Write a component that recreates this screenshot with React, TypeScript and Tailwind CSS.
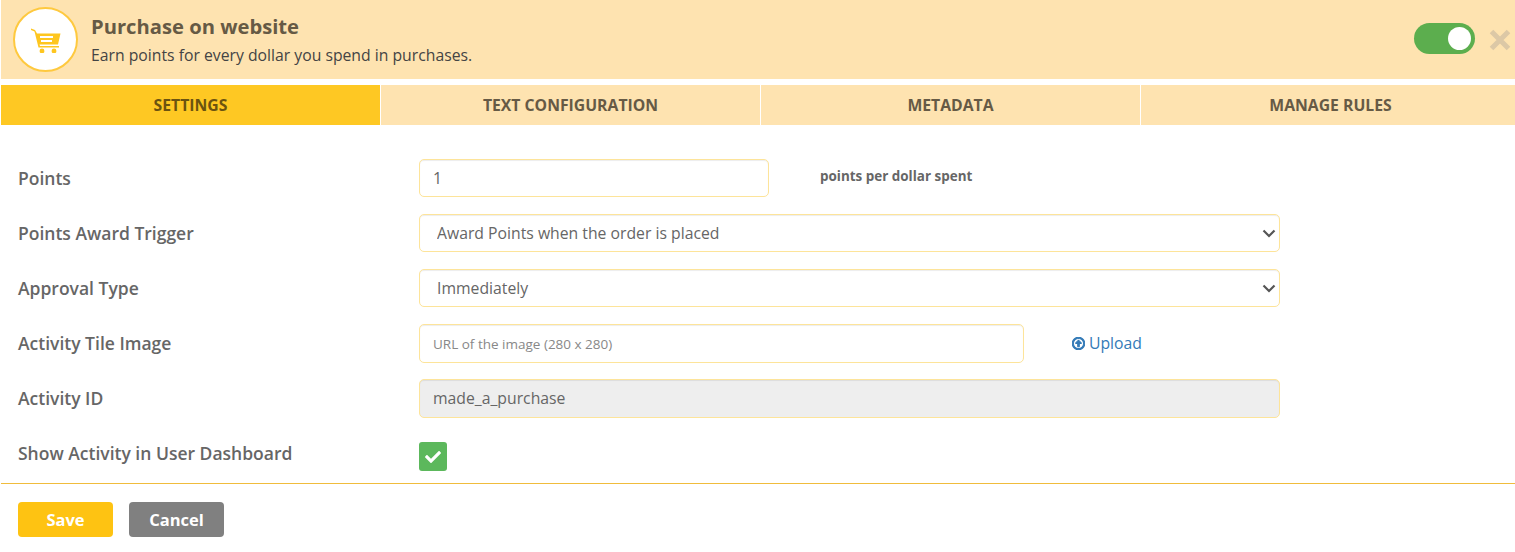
import { FaCheck, FaRegArrowAltCircleUp } from 'react-icons/fa';

const TABS = ['SETTINGS', 'TEXT CONFIGURATION', 'METADATA', 'MANAGE RULES'];

const fieldClass =
    'rounded-[5px] border border-[#fde49a] px-[13px] text-[#666] shadow-[inset_0_1px_1px_rgba(0,0,0,0.075)] outline-none';

function Label({ children }: { children: React.ReactNode }) {
    return <div className="w-[401px] shrink-0 text-[17.5px] font-semibold text-[#666]">{children}</div>;
}

function CartIcon() {
    return (
        <svg viewBox="0 0 32 26" className="h-[26px] w-[32px]">
            <path
                d="M1 1.5 5 3 7 6.5h23.5l-2.5 11H9.5l.5 1.5h19v1.5H8.5L4.5 4.5 1 3z"
                fill="#fec61f"
            />
            <rect x="10" y="9" width="13" height="2" fill="#fff" />
            <rect x="11" y="13" width="11" height="2" fill="#fff" />
            <circle cx="12" cy="24" r="2.4" fill="#fec61f" />
            <circle cx="24" cy="24" r="2.4" fill="#fec61f" />
        </svg>
    );
}

function Select({ value }: { value: string }) {
    return (
        <div className="relative w-[861px]">
            <select className={`${fieldClass} h-[38px] w-full appearance-none pt-[2px] pl-[17px] text-[15.75px]`}>
                <option>{value}</option>
            </select>
            <svg viewBox="0 0 14 9" className="absolute top-[15px] right-[4px] h-[9px] w-[14px]">
                <path d="M1.5 1.5 7 7l5.5-5.5" fill="none" stroke="#555" strokeWidth="2.2" />
            </svg>
        </div>
    );
}

export default function App() {
    return (
        <div className="h-[552px] w-[1515px] overflow-hidden bg-white font-['Open_Sans',sans-serif]">
            <header className="ml-px flex h-[79px] items-center bg-[#fee3b0] pl-3 pr-[4px]">
                <div className="flex h-[65px] w-[65px] shrink-0 items-center justify-center rounded-full border-2 border-[#fec93f] bg-white">
                    <CartIcon />
                </div>
                <div className="ml-[13px] flex-1">
                    <h1 className="text-[20.2px] leading-[27px] font-bold text-[#665a45]">Purchase on website</h1>
                    <p className="mt-[3px] text-[15.75px] leading-[24px] text-[#444]">
                        Earn points for every dollar you spend in purchases.
                    </p>
                </div>
                <div className="-mt-[2px] flex h-[31px] w-[61px] items-center justify-end rounded-full bg-[#5cae4e] pr-[4px]">
                    <span className="h-[23px] w-[23px] rounded-full bg-white" />
                </div>
                <svg viewBox="0 0 22 22" className="ml-[14px] h-[22px] w-[22px]">
                    <path d="M2.5 2.5l17 17M19.5 2.5l-17 17" fill="none" stroke="#dcc8a6" strokeWidth="5" />
                </svg>
            </header>

            <nav className="mt-[6px] ml-px flex h-10 gap-px">
                {TABS.map((tab, i) => (
                    <div
                        key={tab}
                        className={
                            i === 0
                                ? 'flex w-[379px] shrink-0 items-center justify-center bg-[#fec823] pt-px text-[15.75px] font-bold text-[#6b5310]'
                                : 'flex w-[379px] shrink-0 items-center justify-center bg-[#fee3b0] pt-px text-[15.75px] font-bold text-[#665a45]'
                        }
                    >
                        {tab}
                    </div>
                ))}
            </nav>

            <form className="flex flex-col pt-[34px] pl-[18px]">
                <div className="flex items-center">
                    <Label>Points</Label>
                    <input className={`${fieldClass} h-[38px] w-[350px] text-[15.75px]`} defaultValue="1" />
                    <span className="-mt-[4px] ml-[51px] text-[13.45px] font-bold text-[#666]">points per dollar spent</span>
                </div>
                <div className="mt-[17px] flex items-center">
                    <Label>Points Award Trigger</Label>
                    <Select value="Award Points when the order is placed" />
                </div>
                <div className="mt-[17px] flex items-center">
                    <Label>Approval Type</Label>
                    <Select value="Immediately" />
                </div>
                <div className="mt-[17px] flex items-center">
                    <Label>Activity Tile Image</Label>
                    <input
                        className={`${fieldClass} h-[39px] w-[605px] text-[13.5px] placeholder:text-[#888]`}
                        placeholder="URL of the image (280 x 280)"
                    />
                    <a className="ml-[48px] flex items-center gap-[4px] text-[15.75px] text-[#337ab7]">
                        <FaRegArrowAltCircleUp className="h-[13px] w-[13px] stroke-[40]" />
                        Upload
                    </a>
                </div>
                <div className="mt-[16px] flex items-center">
                    <Label>Activity ID</Label>
                    <input
                        className={`${fieldClass} h-[39px] w-[861px] bg-[#eee] pb-[2px] text-[15.75px]`}
                        defaultValue="made_a_purchase"
                        readOnly
                    />
                </div>
                <div className="mt-[24px] flex items-start">
                    <Label>
                        <span className="-mt-[2px] block">Show Activity in User Dashboard</span>
                    </Label>
                    <div className="flex h-[29px] w-[28px] items-center justify-center rounded-[3px] bg-[#5cb85c]">
                        <FaCheck className="h-[16px] w-[16px] text-white" />
                    </div>
                </div>
            </form>

            <div className="mt-[12px] ml-px h-px bg-[#f0bc3c]" />

            <footer className="flex gap-4 pt-[18px] pl-[18px]">
                <button type="button" className="h-[35px] w-[95px] rounded-[4px] bg-[#fec312] pt-px text-[16.5px] font-bold text-white">
                    Save
                </button>
                <button type="button" className="h-[35px] w-[95px] rounded-[4px] bg-[#808080] pt-px text-[16.5px] font-bold text-white">
                    Cancel
                </button>
            </footer>
        </div>
    );
}
